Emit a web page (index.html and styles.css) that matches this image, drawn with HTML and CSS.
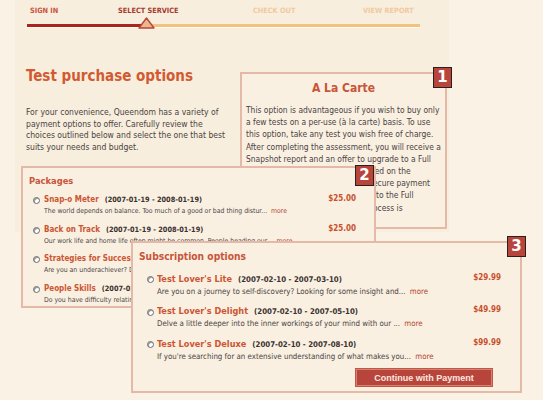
FILE: index.html
```html
<!DOCTYPE html>
<html lang="en">
<head>
    <meta charset="UTF-8">
    <meta name="viewport" content="width=device-width, initial-scale=1.0">
    <title>Test purchase options</title>
<link rel="stylesheet" href="styles.css">
</head>
<body>
<div class="page">
    <div class="frame">
        <!-- Steps -->
        <nav class="steps">
            <span class="step done">SIGN IN</span>
            <span class="step current">SELECT SERVICE</span>
            <span class="step">CHECK OUT</span>
            <span class="step">VIEW REPORT</span>
        </nav>
        <div class="progress">
            <div class="progress-fill"></div>
            <svg class="marker" width="17" height="12" viewBox="0 0 17 12">
                <polygon points="8.5,1 16,11 1,11" fill="#eab88f" stroke="#b8453a" stroke-width="1.4" stroke-linejoin="round"/>
            </svg>
        </div>

        <h1>Test purchase options</h1>
        <p class="intro">For your convenience, Queendom has a variety of payment options to offer. Carefully review the choices outlined below and select the one that best suits your needs and budget.</p>
    </div>

    <!-- 1: a la carte -->
    <section class="card card-carte">
        <span class="badge">1</span>
        <h2 class="carte-title">A La Carte</h2>
        <p class="carte-text">This option is advantageous if you wish to buy only<br>
            a few tests on a per-use (à la carte) basis. To use<br>
            this option, take any test you wish free of charge.<br>
            After completing the assessment, you will receive a<br>
            Snapshot report and an offer to upgrade to a Full<br>
            report. The full price will be included on the<br>
            results page. Just use our quick, secure payment<br>
            system and you will be redirected to the Full<br>
            report as soon as the purchase process is<br>
            complete.</p>
    </section>

    <!-- 2: packages -->
    <section class="card card-packages">
        <span class="badge">2</span>
        <h2 class="card-title">Packages</h2>
        <div class="item">
            <span class="radio"></span>
            <div class="item-body">
                <div class="item-head"><span class="item-name">Snap-o Meter</span><span class="item-dates">(2007-01-19 - 2008-01-19)</span></div>
                <div class="item-desc">The world depends on balance. Too much of a good or bad thing distur... <a href="#" class="more">more</a></div>
            </div>
            <span class="price">$25.00</span>
        </div>
        <div class="item">
            <span class="radio"></span>
            <div class="item-body">
                <div class="item-head"><span class="item-name">Back on Track</span><span class="item-dates">(2007-01-19 - 2008-01-19)</span></div>
                <div class="item-desc">Our work life and home life often might be common. People heading our... <a href="#" class="more">more</a></div>
            </div>
            <span class="price">$25.00</span>
        </div>
        <div class="item">
            <span class="radio"></span>
            <div class="item-body">
                <div class="item-head"><span class="item-name">Strategies for Success</span><span class="item-dates">(2007-01-19 - 2008-01-19)</span></div>
                <div class="item-desc">Are you an underachiever? Do you get stuck... <a href="#" class="more">more</a></div>
            </div>
            <span class="price">$25.00</span>
        </div>
        <div class="item">
            <span class="radio"></span>
            <div class="item-body">
                <div class="item-head"><span class="item-name">People Skills</span><span class="item-dates">(2007-01-19 - 2008-01-19)</span></div>
                <div class="item-desc">Do you have difficulty relating to others... <a href="#" class="more">more</a></div>
            </div>
            <span class="price">$25.00</span>
        </div>
    </section>

    <!-- 3: subscriptions -->
    <section class="card card-subs">
        <span class="badge">3</span>
        <h2 class="card-title">Subscription options</h2>
        <div class="item">
            <span class="radio"></span>
            <div class="item-body">
                <div class="item-head"><span class="item-name">Test Lover's Lite</span><span class="item-dates">(2007-02-10 - 2007-03-10)</span></div>
                <div class="item-desc">Are you on a journey to self-discovery? Looking for some insight and... <a href="#" class="more">more</a></div>
            </div>
            <span class="price">$29.99</span>
        </div>
        <div class="item">
            <span class="radio"></span>
            <div class="item-body">
                <div class="item-head"><span class="item-name">Test Lover's Delight</span><span class="item-dates">(2007-02-10 - 2007-05-10)</span></div>
                <div class="item-desc">Delve a little deeper into the inner workings of your mind with our ... <a href="#" class="more">more</a></div>
            </div>
            <span class="price">$49.99</span>
        </div>
        <div class="item">
            <span class="radio"></span>
            <div class="item-body">
                <div class="item-head"><span class="item-name">Test Lover's Deluxe</span><span class="item-dates">(2007-02-10 - 2007-08-10)</span></div>
                <div class="item-desc">If you're searching for an extensive understanding of what makes you... <a href="#" class="more">more</a></div>
            </div>
            <span class="price">$99.99</span>
        </div>
        <div class="actions">
            <button type="button" class="pay">Continue with Payment</button>
        </div>
    </section>
</div>
</body>
</html>
```

FILE: styles.css
```css
body {
    margin: 0;
    background-color: #faf2e5;
    font-family: "DejaVu Sans Condensed", "DejaVu Sans", sans-serif;
    color: #4a4242;
}
.page {
    position: relative;
    width: 543px;
    height: 400px;
    overflow: hidden;
}
.frame {
    margin-left: 15px;
    width: 434px;
    height: 232px;
    background-color: #f7eedd;
    padding-top: 5px;
    box-sizing: border-box;
}

/* steps */
.steps {
    display: grid;
    grid-template-columns: 88px 135px 110px auto;
    padding-left: 15px;
    font-size: 7.3px;
    font-weight: bold;
    line-height: 12px;
}
.step { color: #f2c9a0; }
.step.done { color: #c8553e; }
.step.current { color: #a93a30; }

.progress {
    position: relative;
    margin: 7px 0 0 12px;
    width: 393px;
    height: 3px;
    background-color: #f3c283;
    box-shadow: 0 1px 0 #fffaf0;
}
.progress-fill {
    width: 118px;
    height: 3px;
    background-color: #a8261f;
}
.marker {
    position: absolute;
    left: 111px;
    top: -7px;
}

h1 {
    margin: 39px 0 0 11px;
    font-size: 15px;
    line-height: 20px;
    color: #d25a32;
}
.intro {
    margin: 21px 0 0 11px;
    width: 203px;
    font-size: 8.55px;
    line-height: 11.7px;
}

/* cards */
.card {
    position: absolute;
    box-sizing: border-box;
    background-color: #f9f0e1;
    border: 2px solid #e5b9a7;
}
.badge {
    position: absolute;
    width: 17px;
    height: 19px;
    background-color: #b8453b;
    border: 1px solid #2b1e1c;
    color: #fff;
    font-family: "DejaVu Sans", sans-serif;
    font-weight: bold;
    font-size: 15px;
    line-height: 19px;
    text-align: center;
}

.card-carte {
    left: 240px;
    top: 72px;
    width: 207px;
    height: 157px;
    padding: 0 4px;
}
.card-carte .badge { right: -7px; top: -7px; }
.carte-title {
    margin: 6px 0 0 0;
    text-align: center;
    font-size: 12px;
    line-height: 16px;
    color: #c8553a;
}
.carte-text {
    margin: 8px 0 0 0;
    font-size: 8.4px;
    line-height: 12.2px;
    white-space: nowrap;
}

.card-packages {
    left: 21px;
    top: 166px;
    width: 355px;
    height: 142px;
    padding: 5px 18px 0 6px;
}
.card-packages .badge { right: 0; top: -3px; }

.card-subs {
    left: 131px;
    top: 241px;
    width: 391px;
    height: 152px;
    padding: 6px 19px 0 6px;
}
.card-subs .badge { right: -6px; top: -7px; }

.card-title {
    margin: 0 0 5px 0;
    font-size: 9.3px;
    line-height: 16px;
    color: #c8553a;
}
.card-subs .card-title {
    font-size: 10.2px;
    margin-bottom: 7.5px;
}

.item {
    display: grid;
    grid-template-columns: 11px 1fr auto;
    margin: 0 0 7.5px 4px;
    white-space: nowrap;
}
.item-body { overflow: hidden; }
.radio {
    margin-top: 3px;
    width: 5px;
    height: 5px;
    border: 1px solid #6a6a6a;
    border-radius: 50%;
    background: #fff;
    box-shadow: inset 1px 1px 0 #999;
}
.item-head {
    font-size: 8px;
    line-height: 12px;
}
.item-name {
    font-size: 8px;
    font-weight: bold;
    color: #cc5533;
    margin-right: 6px;
}
.item-dates {
    font-size: 7.3px;
    font-weight: bold;
    color: #3b3030;
}
.item-desc {
    font-size: 6.85px;
    line-height: 10px;
    color: #4d4545;
}
.more {
    color: #b44630;
    text-decoration: none;
    margin-left: 2px;
}
.price {
    font-size: 8px;
    font-weight: bold;
    color: #c9502e;
    line-height: 9px;
    padding-left: 10px;
}

/* subscription rows are drawn a little larger */
.card-subs .item {
    grid-template-columns: 10px 1fr auto;
    margin: 0 0 8.5px 8px;
}
.card-subs .radio { margin-top: 3.5px; }
.card-subs .item-head { font-size: 9.1px; line-height: 13px; }
.card-subs .item-name { font-size: 9.1px; }
.card-subs .item-dates { font-size: 7.8px; }
.card-subs .item-desc { font-size: 7.85px; line-height: 11px; }
.card-subs .price { font-size: 8px; line-height: 10px; }

.actions {
    display: flex;
    justify-content: flex-end;
    margin-top: -1px;
    padding-right: 9px;
}
.pay {
    width: 136px;
    height: 17px;
    padding: 0;
    background-color: #b8453b;
    border: 1px solid #d8806e;
    outline: 1px solid #c0584a;
    color: #fbe9e0;
    font-family: "Liberation Sans", Arial, sans-serif;
    font-weight: bold;
    font-size: 9px;
    cursor: pointer;
}
```
